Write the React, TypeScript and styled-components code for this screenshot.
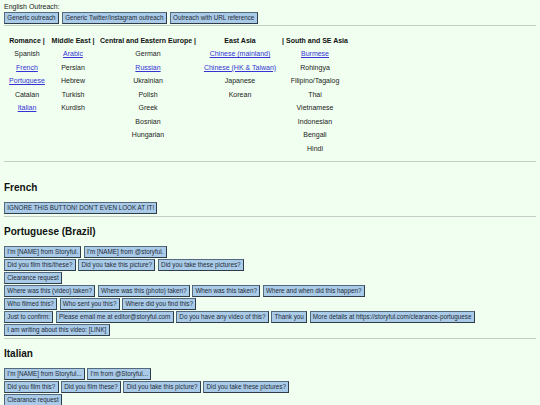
import React from "react";
import styled, { createGlobalStyle } from "styled-components";

const Global = createGlobalStyle`
  html, body { margin: 0; padding: 0; background: #f0fff0; }
  body { font-family: "Liberation Sans", Arial, sans-serif; color: #222; }
`;

const Page = styled.div`
  padding: 3px 4px 0 4px;
`;

const Label = styled.div`
  font-size: 7px;
  line-height: 8.5px;
`;

const ButtonRow = styled.div<{ $top?: boolean }>`
  display: flex;
  flex-wrap: wrap;
  column-gap: ${(p) => (p.$top ? "3px" : "2.4px")};
  margin-bottom: 1px;
`;

const Button = styled.button<{ $tall?: boolean }>`
  font-family: "Liberation Sans", Arial, sans-serif;
  font-size: 6.3px;
  color: #1f2a36;
  background: #a9cbe8;
  border: 1px solid #55697c;
  border-right-color: #2f3d4b;
  border-bottom-color: #2f3d4b;
  border-radius: 0;
  height: ${(p) => (p.$tall ? "12.6px" : "12px")};
  padding: 0 2.3px;
  margin: 0;
  line-height: 1;
  white-space: nowrap;
  cursor: pointer;
`;

const Rule = styled.div<{ $mt: number; $mb?: number }>`
  border-top: 1px solid #c5cbc5;
  margin-top: ${(p) => p.$mt}px;
  margin-bottom: ${(p) => p.$mb ?? 0}px;
`;

const Grid = styled.div`
  display: grid;
  grid-template-columns: 46px 46px 104px 80px 70px;
  grid-auto-rows: 13.5px;
  font-size: 7px;
  align-items: center;
  justify-items: center;
  text-align: center;
`;

const Head = styled.div`
  font-weight: bold;
  color: #111;
  white-space: nowrap;
`;

const Cell = styled.div`
  white-space: nowrap;
`;

const Link = styled.a`
  color: #3434d4;
  text-decoration: underline;
  white-space: nowrap;
`;

const Heading = styled.h2`
  font-size: 10px;
  line-height: 12px;
  font-weight: bold;
  color: #111;
  margin: 8.5px 0 8.5px;
`;

const Spacer = styled.div`
  height: 11px;
`;

type C = { t: string; link?: boolean } | null;

const headers = [
  "Romance |",
  "Middle East |",
  "Central and Eastern Europe |",
  "East Asia",
  "| South and SE Asia",
];

const cols: C[][] = [
  [
    { t: "Spanish" },
    { t: "French", link: true },
    { t: "Portuguese", link: true },
    { t: "Catalan" },
    { t: "Italian", link: true },
  ],
  [
    { t: "Arabic", link: true },
    { t: "Persian" },
    { t: "Hebrew" },
    { t: "Turkish" },
    { t: "Kurdish" },
  ],
  [
    { t: "German" },
    { t: "Russian", link: true },
    { t: "Ukrainian" },
    { t: "Polish" },
    { t: "Greek" },
    { t: "Bosnian" },
    { t: "Hungarian" },
  ],
  [
    { t: "Chinese (mainland)", link: true },
    { t: "Chinese (HK & Taiwan)", link: true },
    { t: "Japanese" },
    { t: "Korean" },
  ],
  [
    { t: "Burmese", link: true },
    { t: "Rohingya" },
    { t: "Filipino/Tagalog" },
    { t: "Thai" },
    { t: "Vietnamese" },
    { t: "Indonesian" },
    { t: "Bengali" },
    { t: "Hindi" },
  ],
];

const french = [["IGNORE THIS BUTTON! DON'T EVEN LOOK AT IT!"]];

const portuguese = [
  ["I'm [NAME] from Storyful.", "I'm [NAME] from @storyful."],
  ["Did you film this/these?", "Did you take this picture?", "Did you take these pictures?"],
  ["Clearance request"],
  [
    "Where was this (video) taken?",
    "Where was this (photo) taken?",
    "When was this taken?",
    "Where and when did this happen?",
  ],
  ["Who filmed this?", "Who sent you this?", "Where did you find this?"],
  [
    "Just to confirm:",
    "Please email me at editor@storyful.com",
    "Do you have any video of this?",
    "Thank you",
    "More details at https://storyful.com/clearance-portuguese",
  ],
  ["I am writing about this video: [LINK]"],
];

const italian = [
  ["I'm [NAME] from Storyful...", "I'm from @Storyful..."],
  ["Did you film this?", "Did you film these?", "Did you take this picture?", "Did you take these pictures?"],
  ["Clearance request"],
];

const Rows = ({ rows }: { rows: string[][] }) => (
  <>
    {rows.map((r, i) => (
      <ButtonRow key={i}>
        {r.map((b) => (
          <Button key={b}>{b}</Button>
        ))}
      </ButtonRow>
    ))}
  </>
);

export default function App() {
  const maxRows = 8;
  const cells: React.ReactNode[] = [];
  headers.forEach((h) => cells.push(<Head key={"h" + h}>{h}</Head>));
  for (let r = 0; r < maxRows; r++) {
    cols.forEach((col, ci) => {
      const c = col[r];
      cells.push(
        <Cell key={r + "-" + ci}>
          {c ? c.link ? <Link href="#">{c.t}</Link> : c.t : null}
        </Cell>
      );
    });
  }
  return (
    <>
      <Global />
      <Page>
        <Label>English Outreach:</Label>
        <ButtonRow $top>
          <Button $tall>Generic outreach</Button>
          <Button $tall>Generic Twitter/Instagram outreach</Button>
          <Button $tall>Outreach with URL reference</Button>
        </ButtonRow>
        <Rule $mt={1} $mb={7.5} />
        <Grid>{cells}</Grid>
        <Rule $mt={6} />
        <Spacer />
        <Heading>French</Heading>
        <Rows rows={french} />
        <Rule $mt={2} />
        <Heading>Portuguese (Brazil)</Heading>
        <Rows rows={portuguese} />
        <Rule $mt={2} />
        <Heading>Italian</Heading>
        <Rows rows={italian} />
      </Page>
    </>
  );
}
